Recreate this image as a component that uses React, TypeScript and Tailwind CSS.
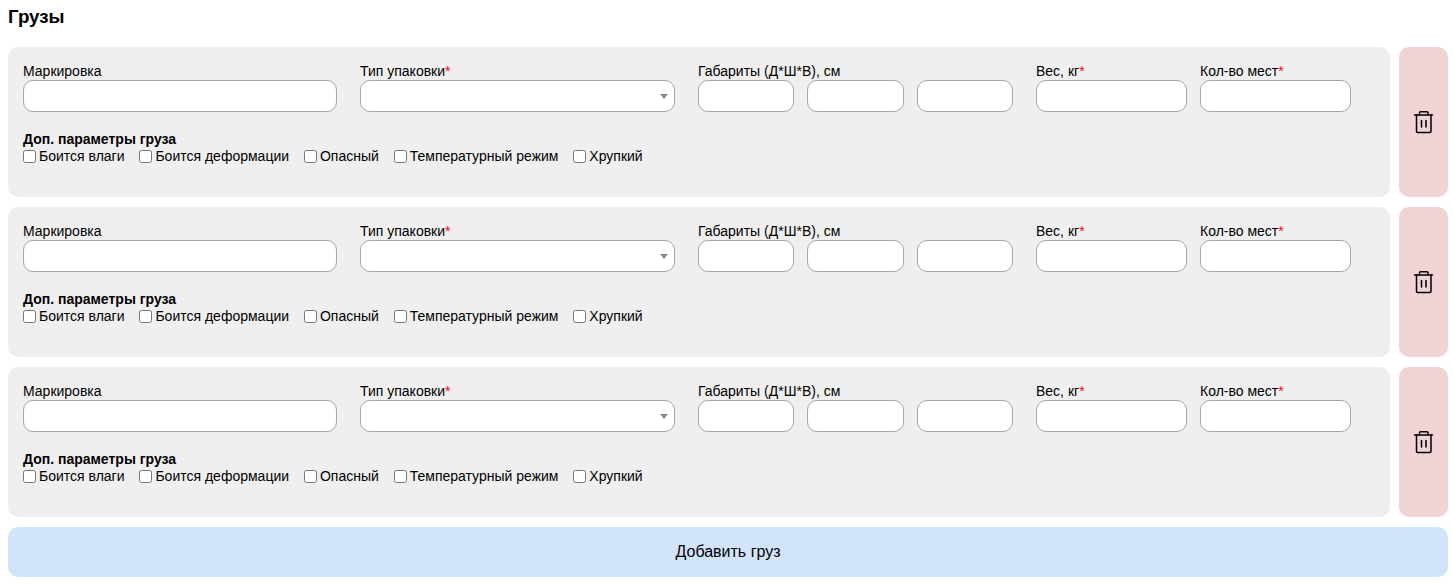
const OPTIONS = ["Боится влаги", "Боится деформации", "Опасный", "Температурный режим", "Хрупкий"];

const inputClass = "block h-8 w-full rounded-[10px] border border-[#a6a6a6] bg-white px-2 outline-none";

function Required() {
    return <span className="text-[#ff0000]">*</span>;
}

function Field({ label, required, className, children }: { label: string; required?: boolean; className: string; children: React.ReactNode }) {
    return (
        <div className={className}>
            <label className="block h-[17px] text-[14px] leading-[17px] text-black">
                {label}
                {required && <Required />}
            </label>
            {children}
        </div>
    );
}

function TrashIcon() {
    return (
        <svg width="24" height="24" viewBox="0 0 24 24" fill="none" stroke="#000" strokeWidth="1.5" strokeLinecap="round" strokeLinejoin="round">
            <path d="M2.5 5h18" />
            <path d="M7.5 5V2.8c0-.6.4-1 1-1h6.5c.6 0 1 .4 1 1V5" />
            <path d="M4.5 5v16.2c0 .7.5 1.2 1.2 1.2h12.1c.7 0 1.2-.5 1.2-1.2V5" />
            <path d="M9.5 10.5v6.5" />
            <path d="M14 10.5v6.5" />
        </svg>
    );
}

function CargoRow() {
    return (
        <div className="flex gap-[9px]">
            <div className="h-[150px] flex-1 rounded-[10px] bg-[#efefef] pl-[15px] pt-[16px]">
                <div className="flex">
                    <Field label="Маркировка" className="w-[314px]">
                        <input type="text" className={inputClass} />
                    </Field>
                    <Field label="Тип упаковки" required className="ml-[23px] w-[315px]">
                        <div className="relative">
                            <select className={`${inputClass} appearance-none`} />
                            <span className="absolute right-[7px] top-[14px] h-0 w-0 border-x-[4px] border-t-[5px] border-x-transparent border-t-[#888888]" />
                        </div>
                    </Field>
                    <Field label="Габариты (Д*Ш*В), см" className="ml-[23px] w-[315px]">
                        <div className="flex gap-[13px]">
                            <input type="text" className={inputClass} />
                            <input type="text" className={inputClass} />
                            <input type="text" className={inputClass} />
                        </div>
                    </Field>
                    <Field label="Вес, кг" required className="ml-[23px] w-[151px]">
                        <input type="text" className={inputClass} />
                    </Field>
                    <Field label="Кол-во мест" required className="ml-[13px] w-[151px]">
                        <input type="text" className={inputClass} />
                    </Field>
                </div>
                <p className="mt-[19px] h-[17px] text-[14px] font-bold leading-[17px] text-black">Доп. параметры груза</p>
                <div className="flex gap-[14.9px]">
                    {OPTIONS.map(o => (
                        <label key={o} className="flex h-[17px] items-center gap-[3px] text-[14px] leading-[17px] text-black">
                            <input type="checkbox" className="h-[13px] w-[13px]" />
                            {o}
                        </label>
                    ))}
                </div>
            </div>
            <button className="flex h-[150px] w-[49px] items-center justify-center rounded-[10px] bg-[#f0d3d4]">
                <TrashIcon />
            </button>
        </div>
    );
}

export default function App() {
    return (
        <div className="h-[585px] overflow-hidden bg-white pl-2 pr-[6px] font-['Liberation_Sans',Arial,sans-serif]">
            <h2 className="h-[47px] pt-[6px] text-[18.72px] font-bold leading-[21px] text-black">Грузы</h2>
            <div className="flex flex-col gap-[10px]">
                <CargoRow />
                <CargoRow />
                <CargoRow />
                <button className="h-[50px] rounded-[10px] bg-[#d2e3fc] text-[16px] text-black">Добавить груз</button>
            </div>
        </div>
    );
}
